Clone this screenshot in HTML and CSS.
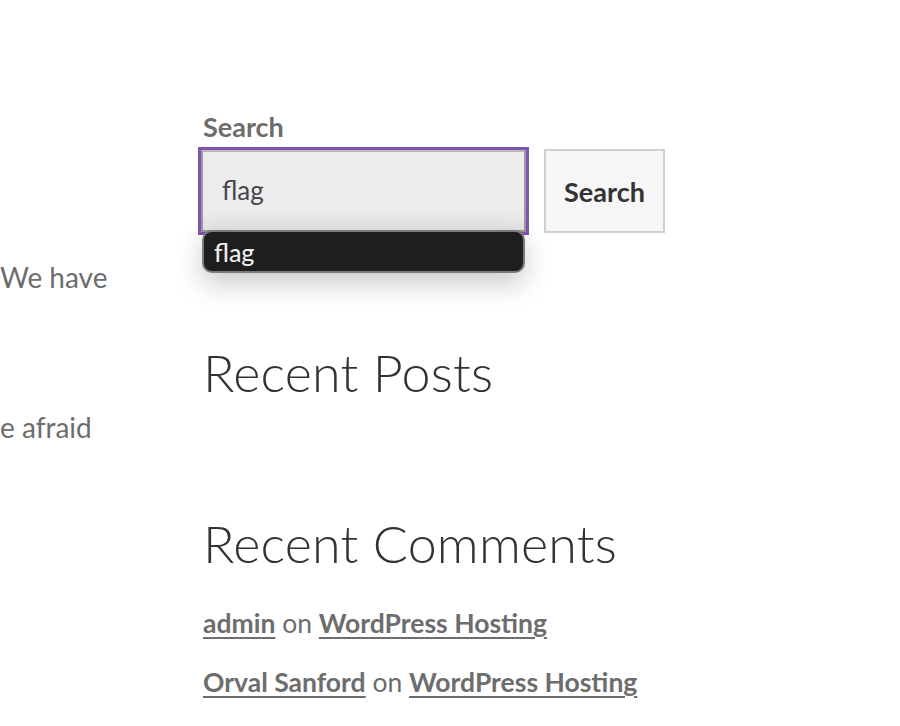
FILE: index.html
```html
<!DOCTYPE html>
<html lang="en">
<head>
<meta charset="utf-8">
<title>Search</title>
<link rel="stylesheet" href="styles.css">
</head>
<body>
<div class="page">
  <main class="content">
    <p class="line line-one">We have</p>
    <p class="line line-two">e afraid</p>
  </main>
  <aside class="sidebar">
    <section class="widget widget-search">
      <label class="search-label" for="s">Search</label>
      <form class="search-form">
        <div class="field-wrap">
          <input id="s" class="search-field" type="search" value="flag">
          <div class="suggest">
            <span class="suggest-item">flag</span>
          </div>
        </div>
        <button class="search-button" type="button">Search</button>
      </form>
    </section>
    <section class="widget">
      <h2 class="widget-title title-posts">Recent Posts</h2>
    </section>
    <section class="widget">
      <h2 class="widget-title title-comments">Recent Comments</h2>
      <ul class="comments">
        <li class="comment"><a href="#">admin</a> on <a href="#">WordPress Hosting</a></li>
        <li class="comment"><a href="#">Orval Sanford</a> on <a href="#">WordPress Hosting</a></li>
      </ul>
    </section>
  </aside>
</div>
</body>
</html>
```

FILE: styles.css
```css
html, body {
  margin: 0;
  padding: 0;
  background: #ffffff;
}

body {
  font-family: Lato, "Open Sans", "Liberation Sans", sans-serif;
  color: #6d6d6d;
  width: 900px;
  height: 726px;
  overflow: hidden;
}

.page {
  display: flex;
  align-items: flex-start;
}

.content {
  width: 190px;
  flex: none;
  overflow: hidden;
  padding-top: 259px;
}

.line {
  margin: 0;
  font-size: 28px;
  line-height: 36px;
  white-space: nowrap;
}

.line-two {
  margin-top: 114px;
}

.sidebar {
  margin-left: 13px;
  width: 480px;
  padding-top: 112px;
}

.widget {
  margin: 0;
}

.search-label {
  display: block;
  font-size: 27px;
  line-height: 30px;
  font-weight: 700;
  color: #6d6d6d;
  margin-bottom: 7px;
}

.search-form {
  display: flex;
  align-items: center;
  gap: 18px;
  margin: 0 0 0 -2px;
}

.field-wrap {
  position: relative;
  width: 325px;
  height: 82px;
}

.search-field {
  box-sizing: border-box;
  width: 325px;
  height: 82px;
  margin: 0;
  padding: 0 0 2px 19px;
  border: 2px solid #9a9a9a;
  border-top-color: #b8b8b8;
  background: linear-gradient(#ededed 70%, #e4e4e4);
  font-family: inherit;
  font-size: 26px;
  color: #43454b;
  outline: 3px solid #7f54b3;
  outline-offset: 0;
  -webkit-appearance: none;
  appearance: none;
}

.suggest {
  position: absolute;
  left: 1px;
  top: 80px;
  box-sizing: border-box;
  width: 323px;
  height: 43px;
  background: #1e1e1e;
  border: 2px solid #7a7a7a;
  border-radius: 10px;
  box-shadow: 0 10px 28px rgba(0, 0, 0, 0.22);
  padding-left: 10px;
  display: flex;
  align-items: center;
}

.suggest-item {
  font-size: 25px;
  line-height: 30px;
  color: #ececec;
  font-weight: 500;
}

.search-button {
  box-sizing: border-box;
  width: 121px;
  height: 84px;
  margin: 0;
  padding: 0;
  background: #f6f6f6;
  border: 2px solid #d0d0d0;
  font-family: inherit;
  font-size: 27px;
  font-weight: 700;
  color: #333333;
}

.widget-title {
  margin: 0;
  font-size: 52px;
  line-height: 60px;
  font-weight: 300;
  letter-spacing: 0.2px;
  color: #333333;
}

.title-posts {
  margin-top: 109px;
}

.title-comments {
  margin-top: 111px;
}

.comments {
  list-style: none;
  margin: 35px 0 0;
  padding: 0;
}

.comment {
  font-size: 26.5px;
  line-height: 30px;
  color: #6d6d6d;
}

.comment + .comment {
  margin-top: 29px;
}

.comment a {
  color: #6d6d6d;
  font-weight: 700;
  text-decoration: underline;
  text-decoration-thickness: 2px;
  text-underline-offset: 4px;
}
```
